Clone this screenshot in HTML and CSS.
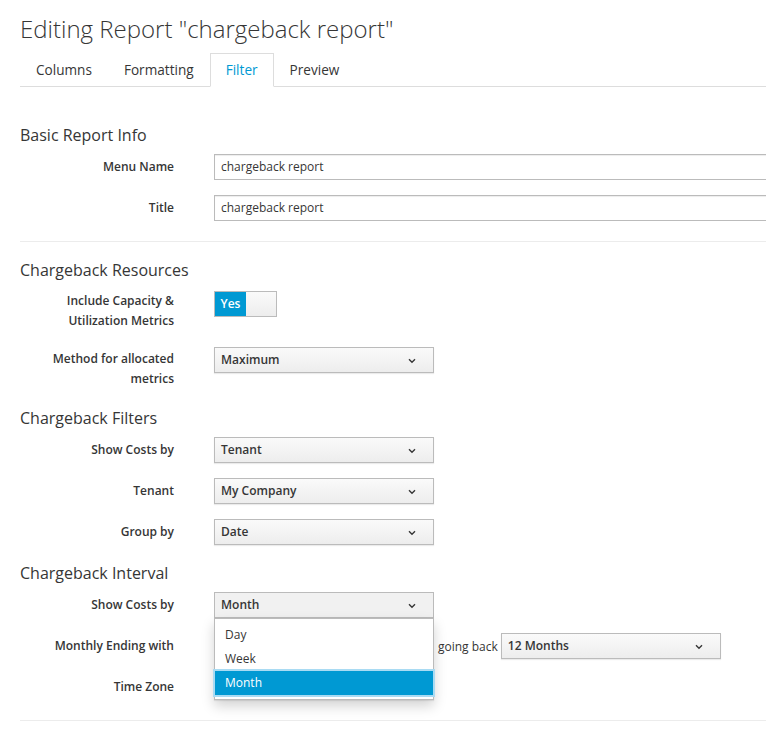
FILE: index.html
```html
<!DOCTYPE html>
<html lang="en">
<head>
<meta charset="utf-8">
<title>Editing Report</title>
<link rel="stylesheet" href="styles.css">
</head>
<body>
<div class="page">
  <h1 class="title">Editing Report "chargeback report"</h1>
  <ul class="tabs">
    <li class="tab">Columns</li>
    <li class="tab">Formatting</li>
    <li class="tab active">Filter</li>
    <li class="tab">Preview</li>
  </ul>

  <div class="form">
    <section class="section first">
      <h3 class="section-title">Basic Report Info</h3>
      <div class="row">
        <label class="label">Menu Name</label>
        <div class="control"><div class="input">chargeback report</div></div>
      </div>
      <div class="row">
        <label class="label">Title</label>
        <div class="control"><div class="input">chargeback report</div></div>
      </div>
    </section>

    <hr class="divider">

    <section class="section after-divider">
      <h3 class="section-title">Chargeback Resources</h3>
      <div class="row row-switch">
        <label class="label label-multi">Include Capacity &amp; Utilization Metrics</label>
        <div class="control">
          <div class="switch"><span class="switch-on">Yes</span><span class="switch-handle"></span></div>
        </div>
      </div>
      <div class="row">
        <label class="label label-multi2">Method for allocated metrics</label>
        <div class="control">
          <div class="select"><span>Maximum</span><svg class="caret" width="8" height="6" viewBox="0 0 8 6"><polyline points="1,1.2 4,4.2 7,1.2" fill="none" stroke="#363636" stroke-width="1.4"/></svg></div>
        </div>
      </div>
    </section>

    <section class="section filters">
      <h3 class="section-title">Chargeback Filters</h3>
      <div class="row">
        <label class="label">Show Costs by</label>
        <div class="control">
          <div class="select"><span>Tenant</span><svg class="caret" width="8" height="6" viewBox="0 0 8 6"><polyline points="1,1.2 4,4.2 7,1.2" fill="none" stroke="#363636" stroke-width="1.4"/></svg></div>
        </div>
      </div>
      <div class="row">
        <label class="label">Tenant</label>
        <div class="control">
          <div class="select"><span>My Company</span><svg class="caret" width="8" height="6" viewBox="0 0 8 6"><polyline points="1,1.2 4,4.2 7,1.2" fill="none" stroke="#363636" stroke-width="1.4"/></svg></div>
        </div>
      </div>
      <div class="row">
        <label class="label">Group by</label>
        <div class="control">
          <div class="select"><span>Date</span><svg class="caret" width="8" height="6" viewBox="0 0 8 6"><polyline points="1,1.2 4,4.2 7,1.2" fill="none" stroke="#363636" stroke-width="1.4"/></svg></div>
        </div>
      </div>
    </section>

    <section class="section interval">
      <h3 class="section-title">Chargeback Interval</h3>
      <div class="row">
        <label class="label">Show Costs by</label>
        <div class="control">
          <div class="select-wrap">
            <div class="select open"><span>Month</span><svg class="caret" width="8" height="6" viewBox="0 0 8 6"><polyline points="1,1.2 4,4.2 7,1.2" fill="none" stroke="#363636" stroke-width="1.4"/></svg></div>
            <ul class="menu">
              <li class="menu-item">Day</li>
              <li class="menu-item">Week</li>
              <li class="menu-item selected">Month</li>
            </ul>
          </div>
        </div>
      </div>
      <div class="row">
        <label class="label">Monthly Ending with</label>
        <div class="control inline">
          <div class="input short"></div>
          <span class="inline-text">going back</span>
          <div class="select"><span>12 Months</span><svg class="caret" width="8" height="6" viewBox="0 0 8 6"><polyline points="1,1.2 4,4.2 7,1.2" fill="none" stroke="#363636" stroke-width="1.4"/></svg></div>
        </div>
      </div>
      <div class="row">
        <label class="label">Time Zone</label>
        <div class="control">
          <div class="select"></div>
        </div>
      </div>
    </section>

    <hr class="divider">
  </div>
</div>
</body>
</html>
```

FILE: styles.css
```css
* { box-sizing: border-box; }

html, body {
  margin: 0;
  padding: 0;
  background: #ffffff;
}

body {
  font-family: "Open Sans", "Liberation Sans", sans-serif;
  color: #363636;
  font-size: 12px;
  overflow: hidden;
}

.page {
  padding: 0 0 0 20px;
  overflow: hidden;
}

.title {
  margin: 13px 0 8px;
  font-size: 24px;
  line-height: 32px;
  font-weight: 300;
  color: #363636;
  white-space: nowrap;
}

.tabs {
  display: flex;
  list-style: none;
  margin: 0;
  padding: 0;
  border-bottom: 1px solid #ddd;
}

.tab {
  font-size: 13.6px;
  line-height: 32px;
  padding: 0 15px;
  border: 1px solid transparent;
  margin-bottom: -1px;
  color: #363636;
}

.tab.active {
  border-color: #ddd;
  border-bottom-color: #fff;
  background: #fff;
  color: #0099d3;
}

.section-title {
  margin: 18px 0 8px;
  font-size: 16px;
  line-height: 22px;
  font-weight: 400;
  color: #363636;
}

.section.first .section-title { margin-top: 37px; }
.section.after-divider .section-title { margin-top: 0; }
.section.interval .section-title { margin-top: 17px; }

.divider {
  border: 0;
  border-top: 1px solid #ececec;
  margin: 20px 0 17px;
  height: 0;
}

.row {
  display: grid;
  grid-template-columns: 154px 1fr;
  column-gap: 40px;
  margin-bottom: 15px;
}

.row-switch {
  padding-top: 2px;
  margin-bottom: 16px;
}

.label {
  text-align: right;
  font-weight: 600;
  font-size: 12px;
  line-height: 20px;
  padding-top: 3px;
  color: #363636;
}

.label-multi { padding-top: 0; }
.label-multi2 { padding-top: 2px; }

.control { min-width: 0; }

.control.inline {
  display: flex;
  align-items: center;
}

.input {
  width: 700px;
  height: 26px;
  border: 1px solid #bbb;
  box-shadow: inset 0 1px 1px rgba(3, 3, 3, 0.075);
  padding: 0 6px;
  font-size: 12px;
  line-height: 24px;
  color: #363636;
  background: #fff;
}

.input.short {
  width: 220px;
  flex: none;
}

.inline-text {
  margin: 0 3px 0 4px;
  font-size: 12px;
  white-space: nowrap;
}

.select {
  position: relative;
  width: 220px;
  height: 26px;
  flex: none;
  border: 1px solid #bbb;
  background: linear-gradient(to bottom, #fafafa 0%, #ededed 100%);
  box-shadow: 0 1px 1px rgba(3, 3, 3, 0.08);
  padding: 0 24px 0 6px;
  font-weight: 600;
  font-size: 12px;
  line-height: 24px;
  color: #363636;
  white-space: nowrap;
}

.select.open {
  background: #f1f1f1;
  box-shadow: none;
}

.caret {
  position: absolute;
  right: 17px;
  top: 10px;
}

.select-wrap {
  position: relative;
  width: 220px;
}

.menu {
  position: absolute;
  top: 26px;
  left: 0;
  width: 220px;
  z-index: 10;
  margin: 0;
  padding: 4px 0 4px;
  list-style: none;
  background: #fff;
  border: 1px solid #bbb;
  box-shadow: 0 6px 12px rgba(0, 0, 0, 0.175);
}

.menu-item {
  padding: 0 10px;
  line-height: 24px;
  font-size: 12px;
  color: #363636;
}

.menu-item.selected {
  background: #0099d3;
  color: #fff;
  box-shadow: 0 0 0 2px #a9dbf3;
  position: relative;
}

.switch {
  display: flex;
  width: 63px;
  height: 26px;
  border: 1px solid #bbb;
  background: linear-gradient(to bottom, #fafafa 0%, #ededed 100%);
}

.switch-on {
  width: 31px;
  background: #0099d3;
  color: #fff;
  font-weight: 600;
  font-size: 12px;
  line-height: 24px;
  text-align: center;
}

.switch-handle {
  flex: 1;
}
```
